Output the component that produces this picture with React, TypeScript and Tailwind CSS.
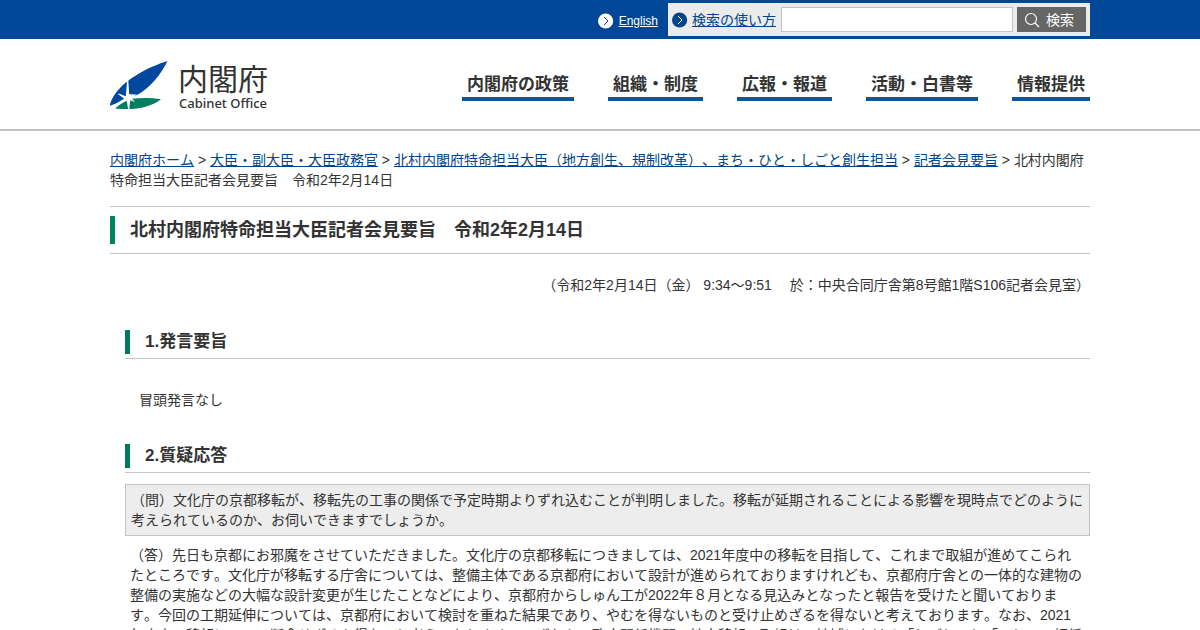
const navItems = ["内閣府の政策", "組織・制度", "広報・報道", "活動・白書等", "情報提供"];

const crumbs = [
  "内閣府ホーム",
  "大臣・副大臣・大臣政務官",
  "北村内閣府特命担当大臣（地方創生、規制改革）、まち・ひと・しごと創生担当",
  "記者会見要旨",
];

const ArrowIcon = ({ circle, arrow }: { circle: string; arrow: string }) => (
  <svg className="h-4 w-4 shrink-0" viewBox="0 0 16 16" fill="none" aria-hidden="true">
    <circle cx="7.6" cy="8" r="7.6" fill={circle} />
    <path d="M6 4l4 4-4 4" stroke={arrow} strokeWidth="1" />
  </svg>
);

const Logo = () => (
  <a href="#" className="flex items-start">
    <svg className="h-[50px] w-[60px]" viewBox="0 0 60 50" aria-hidden="true">
      <path
        fill="#00479d"
        d="M57.5 0C48 3 36 8 27.500 13.500C13 22 2 33 0 44.500C6 43 14 39.500 20 37L27 34C41 26.500 51 13 57.500 0Z"
      />
      <path fill="#00805f" d="M5.500 47.500C10 42 15 39 22 37.800C32 36.500 42 36.800 51 38.300C44 43.500 34 47.500 22 48C15 48.300 10 47.500 5.500 47.500Z" />
      {/* white star where the two leaves cross */}
      <path
        fill="#fff"
        d="M17.200 18L18.200 18L19.200 33.200L27 33.500L21.500 37L25 41L20.200 39.300L19.200 49L18.200 49L16.800 40L4 48L1 45.500L14 37.800L8 33.200L8.600 32.400L15.800 35.200Z"
      />
      <path fill="#00479d" d="M0 44.500C0.800 40 3.500 36 6.800 32.500L13.800 37.600L1.500 44Z" />
      <path fill="#00805f" d="M5.500 47.500C8 44.800 11 42.300 15.800 40.200L17.600 48C12 48 8 47.600 5.500 47.500Z" />
    </svg>
    <span className="ml-2 flex flex-col text-[#333]">
      <span className="font-['Noto_Sans_CJK_JP',sans-serif] text-[30px] leading-8">内閣府</span>
      <span className="pl-px font-['Noto_Sans',sans-serif] text-[13px] leading-5 font-medium">Cabinet Office</span>
    </span>
  </a>
);

const SectionTitle = ({ children }: { children: string }) => (
  <h2 className="border-b border-[#c3c3c3] pb-1 text-[17px] leading-6 font-bold">
    <span className="block border-l-5 border-[#007a5e] pl-[15px]">{children}</span>
  </h2>
);

const App = () => {
  return (
    <div className="bg-white font-['Liberation_Sans','Noto_Sans_CJK_JP',sans-serif] text-sm leading-5 text-[#333] [font-kerning:none] [text-spacing-trim:space-all]" lang="ja">
      <div className="bg-[#004797] py-[3px]">
        <div className="mx-auto flex max-w-[980px] items-center justify-end gap-2.5">
          <a href="#" className="flex items-center gap-[5px] pt-0.5 text-xs leading-5 text-white underline">
            <ArrowIcon circle="#fff" arrow="#004797" />
            English
          </a>
          <form className="flex items-center gap-1 bg-[#ebebeb] p-1" onSubmit={(e) => e.preventDefault()}>
            <a href="#" className="flex items-center gap-1 text-[#00458c] underline">
              <ArrowIcon circle="#00458c" arrow="#fff" />
              検索の使い方
            </a>
            <input type="text" aria-label="検索" className="ml-px h-[25px] w-58 border border-[#c3c3c3] bg-white px-1" />
            <button type="submit" className="flex h-[25px] w-[69px] items-center gap-1.5 bg-[#666] pl-[7px] text-white">
              <svg className="h-4 w-4" viewBox="0 0 16 16" fill="none" stroke="#fff" strokeWidth="1.200" aria-hidden="true">
                <circle cx="7" cy="7" r="5.500" />
                <path d="M11 11L15 15" />
              </svg>
              検索
            </button>
          </form>
        </div>
      </div>

      <header className="border-b-2 border-[#c3c3c3]">
        <div className="mx-auto flex max-w-[980px] items-start justify-between pt-[22px] pb-4">
          <Logo />
          <nav className="pt-3">
            <ul className="flex gap-[34px]">
              {navItems.map((item) => (
                <li key={item}>
                  <a href="#" className="block border-b-4 border-[#0a559c] px-[5px] text-[17px] leading-6 font-bold">
                    {item}
                  </a>
                </li>
              ))}
            </ul>
          </nav>
        </div>
      </header>

      <main className="mx-auto max-w-[980px] pt-[19px]">
        <nav aria-label="現在位置">
          {crumbs.map((crumb) => (
            <span key={crumb}>
              <a href="#" className="text-[#00458c] underline">
                {crumb}
              </a>
              {" > "}
            </span>
          ))}
          北村内閣府特命担当大臣記者会見要旨　令和2年2月14日
        </nav>

        <h1 className="mt-4 border-y border-[#c3c3c3] py-[9px] text-lg leading-7 font-bold">
          <span className="block border-l-5 border-[#008560] pl-[15px]">
            北村内閣府特命担当大臣記者会見要旨　令和2年2月14日
          </span>
        </h1>

        <p className="mt-[21px] text-right">（令和2年2月14日（金） 9:34～9:51　 於：中央合同庁舎第8号館1階S106記者会見室）</p>

        <div className="mt-[35px] pl-[15px]">
          <SectionTitle>1.発言要旨</SectionTitle>
          <p className="mt-[31px] mb-[34px] pl-3.5">冒頭発言なし</p>

          <SectionTitle>2.質疑応答</SectionTitle>
          <p className="mt-[11px] border border-[#c3c3c3] bg-[#ededed] p-[5px]">
            （問）文化庁の京都移転が、移転先の工事の関係で予定時期よりずれ込むことが判明しました。移転が延期されることによる影響を現時点でどのように考えられているのか、お伺いできますでしょうか。
          </p>
          <p className="mt-[9px] pr-[7px] pl-[5px]">
            （答）先日も京都にお邪魔をさせていただきました。文化庁の京都移転につきましては、2021年度中の移転を目指して、これまで取組が進めてこられたところです。文化庁が移転する庁舎については、整備主体である京都府において設計が進められておりますけれども、京都府庁舎との一体的な建物の整備の実施などの大幅な設計変更が生じたことなどにより、京都府からしゅん工が2022年８月となる見込みとなったと報告を受けたと聞いております。今回の工期延伸については、京都府において検討を重ねた結果であり、やむを得ないものと受け止めざるを得ないと考えております。なお、2021年度中の移転について断念せざるを得ないと考えております。いずれも、政府関係機関の地方移転の取組は、地域における「しごと」と「ひと」の好循環をつくるものであります。
          </p>
        </div>
      </main>
    </div>
  );
};

export default App;
